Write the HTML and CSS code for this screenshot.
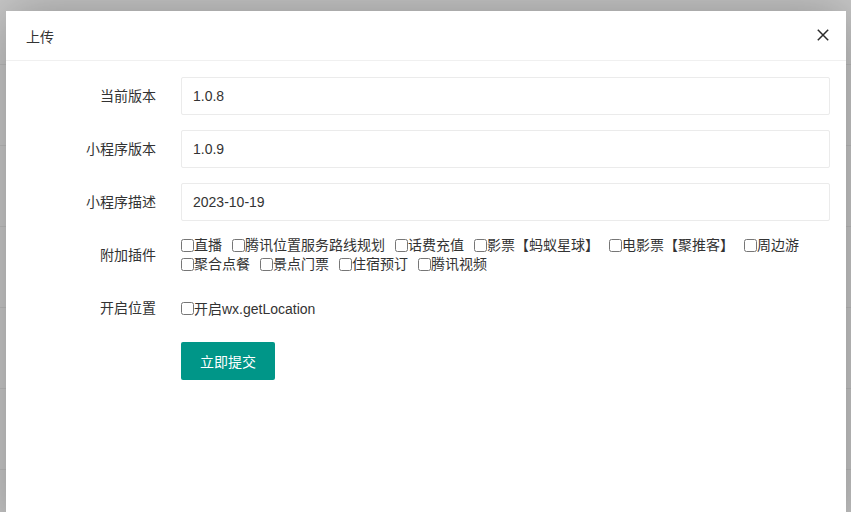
FILE: index.html
```html
<!DOCTYPE html>
<html lang="zh-CN">
<head>
    <meta charset="UTF-8">
    <meta name="viewport" content="width=device-width, initial-scale=1.0">
    <title>上传</title>
    <link rel="stylesheet" href="styles.css">
</head>
<body>
    <!-- Upload dialog over the page -->
    <div class="dialog">
        <div class="dialog-title">
            <span>上传</span>
            <a class="dialog-close" href="#">
                <svg width="12" height="12" viewBox="0 0 12 12">
                    <path d="M0.8 0.8 L11.2 11.2 M11.2 0.8 L0.8 11.2" stroke="#2b2b2b" stroke-width="1.5" fill="none"/>
                </svg>
            </a>
        </div>

        <form class="dialog-body">
            <div class="form-item">
                <label class="form-label">当前版本</label>
                <div class="form-field">
                    <input class="form-input" type="text" value="1.0.8">
                </div>
            </div>
            <div class="form-item">
                <label class="form-label">小程序版本</label>
                <div class="form-field">
                    <input class="form-input" type="text" value="1.0.9">
                </div>
            </div>
            <div class="form-item">
                <label class="form-label">小程序描述</label>
                <div class="form-field">
                    <input class="form-input" type="text" value="2023-10-19">
                </div>
            </div>
            <div class="form-item">
                <label class="form-label">附加插件</label>
                <div class="form-field check-group">
                    <label class="check"><input type="checkbox">直播</label>
                    <label class="check"><input type="checkbox">腾讯位置服务路线规划</label>
                    <label class="check"><input type="checkbox">话费充值</label>
                    <label class="check"><input type="checkbox">影票【蚂蚁星球】</label>
                    <label class="check"><input type="checkbox">电影票【聚推客】</label>
                    <label class="check"><input type="checkbox">周边游</label>
                    <label class="check"><input type="checkbox">聚合点餐</label>
                    <label class="check"><input type="checkbox">景点门票</label>
                    <label class="check"><input type="checkbox">住宿预订</label>
                    <label class="check"><input type="checkbox">腾讯视频</label>
                </div>
            </div>
            <div class="form-item">
                <label class="form-label">开启位置</label>
                <div class="form-field check-single">
                    <label class="check"><input type="checkbox">开启wx.getLocation</label>
                </div>
            </div>
            <div class="form-item">
                <div class="form-field offset">
                    <button class="btn" type="button">立即提交</button>
                </div>
            </div>
        </form>
    </div>
</body>
</html>
```

FILE: styles.css
```css
* {
    margin: 0;
    padding: 0;
    box-sizing: border-box;
}

html,
body {
    height: 100%;
    overflow: hidden;
}

body {
    font-family: "Liberation Sans", "Noto Sans CJK SC", sans-serif;
    font-size: 14px;
    color: #333;
    padding: 11px 5px 0 6px;
    background-color: #c8c8c8;
    background-image: repeating-linear-gradient(to bottom, #c8c8c8 0, #c8c8c8 80px, #bcbcbc 80px, #bcbcbc 81px);
    background-position: 0 -16px;
}

/* Dialog */
.dialog {
    background-color: #fff;
    height: 520px;
    box-shadow: 1px 1px 50px rgba(0, 0, 0, 0.3);
}

.dialog-title {
    display: flex;
    justify-content: space-between;
    align-items: center;
    height: 50px;
    padding: 0 17px 0 20px;
    border-bottom: 1px solid #f0f0f0;
    font-size: 14px;
    color: #333;
}

.dialog-close {
    display: flex;
    width: 12px;
    height: 12px;
    margin-top: -2px;
}

.dialog-body {
    padding: 16px 16px 0 0;
}

/* Form rows */
.form-item {
    display: flex;
    margin-bottom: 15px;
}

.form-label {
    flex-shrink: 0;
    width: 150px;
    padding: 9px 0;
    line-height: 20px;
    text-align: right;
    color: #333;
}

.form-field {
    flex: 1;
    margin-left: 25px;
}

.form-field.offset {
    margin-left: 175px;
}

.form-input {
    display: block;
    width: 100%;
    height: 38px;
    padding-left: 11px;
    border: 1px solid #ebebeb;
    border-radius: 2px;
    font-family: inherit;
    font-size: 14px;
    color: #333;
    outline: none;
}

/* Checkboxes */
.check-group {
    display: flex;
    flex-wrap: wrap;
    line-height: 19px;
    height: 38px;
}

.check-single {
    display: flex;
    align-items: center;
    height: 38px;
}

.check {
    display: inline-flex;
    align-items: center;
    margin-right: 10px;
    white-space: nowrap;
}

.check input {
    width: 13px;
    height: 13px;
    margin: 0;
}

/* Submit */
.btn {
    height: 38px;
    padding: 0 19px;
    border: none;
    border-radius: 2px;
    background-color: #009688;
    color: #fff;
    font-family: inherit;
    font-size: 14px;
    cursor: pointer;
}
```
